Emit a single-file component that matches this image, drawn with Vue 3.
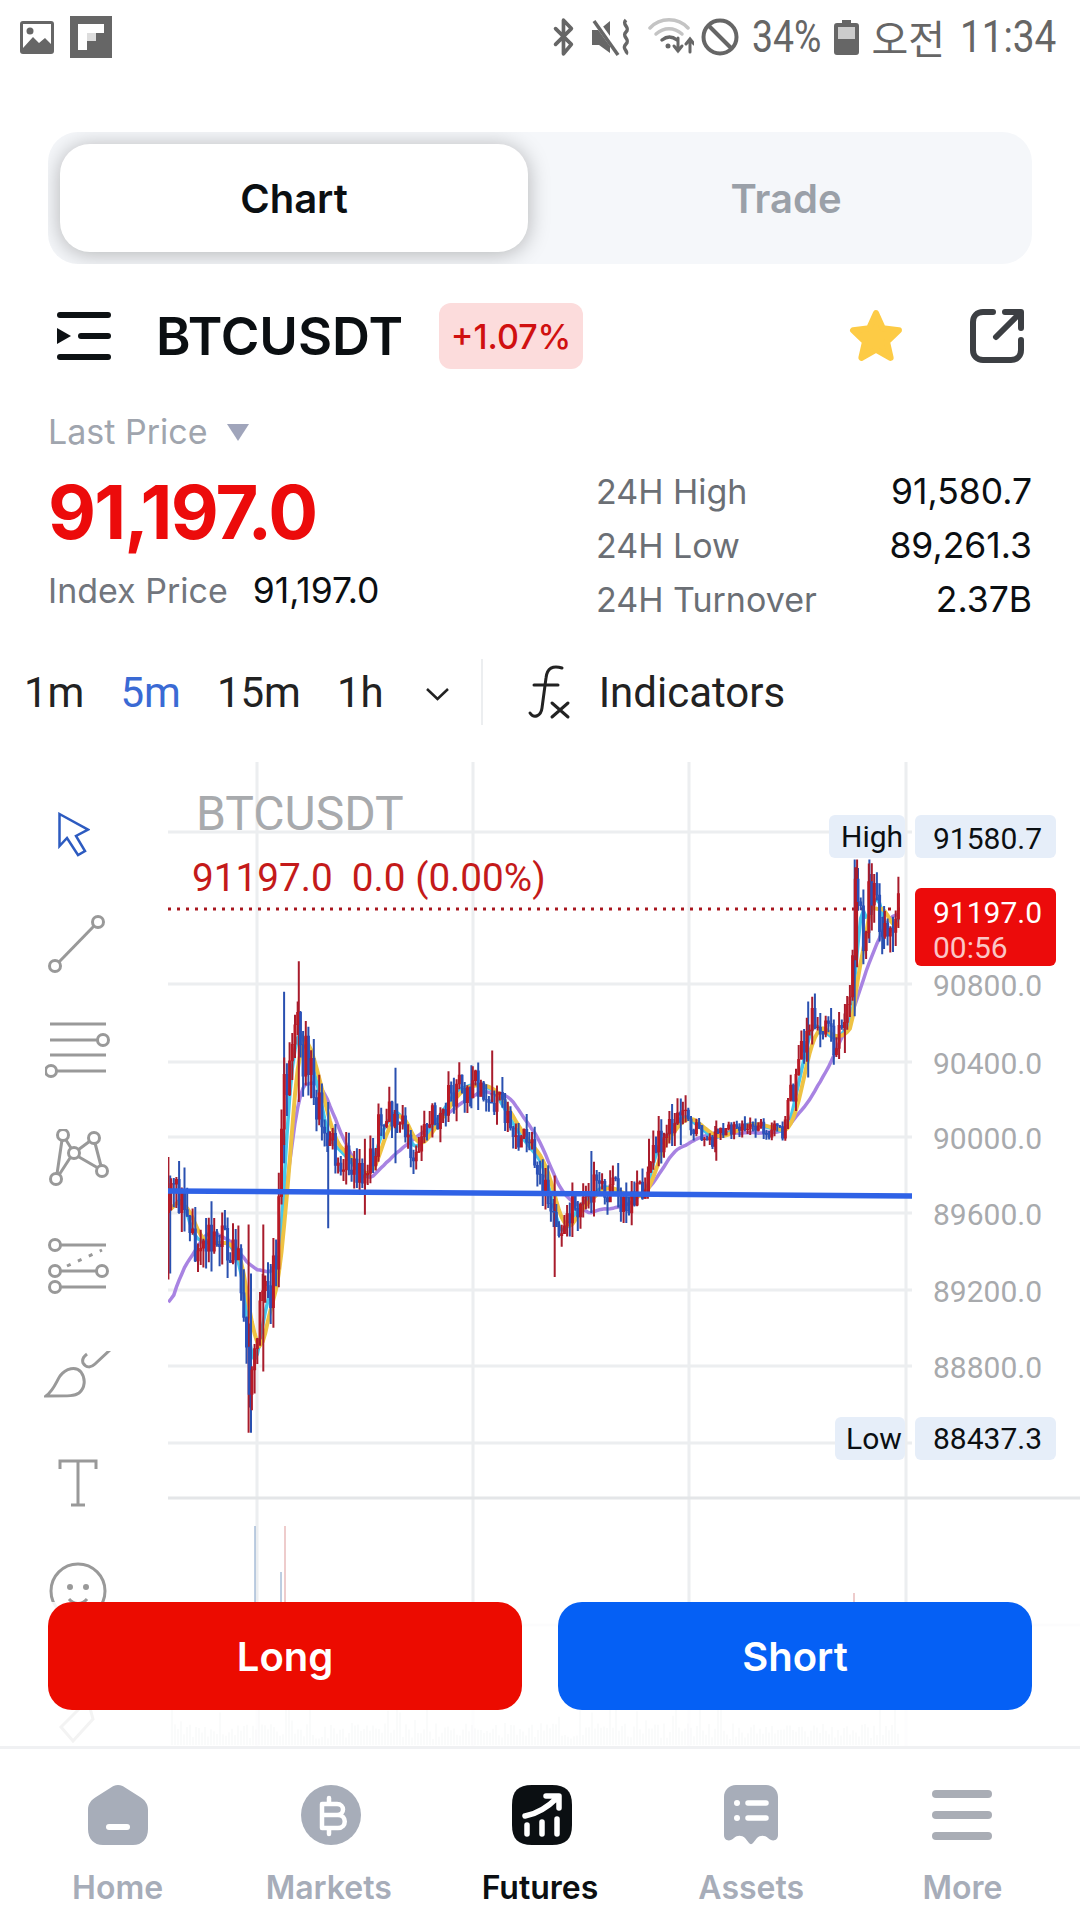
<script setup>
const S = 1080 / 882

const closeKeys = [[137,990],[145,975],[155,1010],[165,1015],[185,1015],[195,1040],[203,1125],[210,1090],[215,1060],[225,1040],[232,900],[240,835],[255,880],[265,930],[280,945],[297,965],[310,920],[322,905],[335,940],[350,920],[370,890],[385,885],[400,890],[420,925],[440,950],[455,1010],[470,985],[490,968],[510,978],[525,975],[532,940],[555,910],[580,930],[610,917],[640,925],[650,880],[660,835],[680,850],[695,830],[698,725],[705,760],[712,725],[722,765],[733,745]]
const purpleKeys = [[137,1070],[150,1035],[170,1005],[190,1015],[205,1035],[225,1040],[235,960],[245,885],[262,885],[280,930],[300,965],[320,945],[345,925],[370,905],[395,890],[415,895],[440,930],[460,975],[480,990],[510,985],[530,970],[550,940],[580,925],[610,925],[640,925],[660,900],[680,865],[695,830],[710,785],[725,750],[735,745]]
const spikes = [[137.5,945,1045],[139,960,1040],[203,1000,1170],[205,1040,1170],[215,1000,1120],[232,810,950],[244,785,900],[268,900,1003],[298,930,992],[323,872,950],[402,858,900],[385,870,905],[453,960,1043],[483,940,990],[530,930,975],[556,897,935],[585,915,948],[660,818,880],[690,820,860],[698,702,830],[700,702,790],[710,702,770],[712,705,760],[722,740,775]]

function interp(keys, x) {
  for (let i = 1; i < keys.length; i++) {
    if (x <= keys[i][0]) {
      const [x0, y0] = keys[i - 1]
      const [x1, y1] = keys[i]
      return y0 + ((y1 - y0) * (x - x0)) / (x1 - x0)
    }
  }
  return keys[keys.length - 1][1]
}

let seed = 20240
function rnd() {
  seed = (seed * 16807) % 2147483647
  return seed / 2147483647
}

function amp(x) {
  if (x < 262) return 44
  if (x > 560 && x < 642) return 14
  if (x > 692) return 36
  if (x > 642) return 30
  return 28
}

const closes = []
let wR = ''
let bR = ''
let wB = ''
let bB = ''
let prev = interp(closeKeys, 137)
for (let x = 137.5; x <= 734; x += 2.2) {
  const a = amp(x)
  const base = interp(closeKeys, x)
  const c = base + (rnd() - 0.5) * a
  closes.push([x, base])
  const hi = Math.min(prev, c) - rnd() * a * 0.45
  const lo = Math.max(prev, c) + rnd() * a * 0.45
  const px = (x * S).toFixed(1)
  const w = `M${px} ${(hi * S).toFixed(1)}V${(lo * S).toFixed(1)}`
  const b = `M${px} ${(Math.min(prev, c) * S).toFixed(1)}V${((Math.max(prev, c) + 0.5) * S).toFixed(1)}`
  if (c < prev) { wR += w; bR += b } else { wB += w; bB += b }
  prev = c
}
for (const [i, sp] of spikes.entries()) {
  const px = (sp[0] * S).toFixed(1)
  const w = `M${px} ${(sp[1] * S).toFixed(1)}V${(sp[2] * S).toFixed(1)}`
  if (i % 2 === 0) wR += w
  else wB += w
}

function smoothLine(pts, win) {
  const out = []
  for (let i = 0; i < pts.length; i++) {
    let sum = 0
    let n = 0
    for (let j = Math.max(0, i - win); j <= i; j++) { sum += pts[j][1]; n++ }
    out.push(`${(pts[i][0] * S).toFixed(1)},${((sum / n) * S).toFixed(1)}`)
  }
  return out.join(' ')
}
const cyanLine = smoothLine(closes, 3)
const yellowLine = smoothLine(closes, 6)
const purplePts = []
for (let x = 137.5; x <= 735; x += 2.2) purplePts.push([x, interp(purpleKeys, x) + (rnd() - 0.5) * 4])
function centered(pts, w) {
  return pts.map((p, i) => {
    let s = 0
    let n = 0
    for (let j = Math.max(0, i - w); j <= Math.min(pts.length - 1, i + w); j++) { s += pts[j][1]; n++ }
    return `${(p[0] * S).toFixed(1)},${((s / n) * S).toFixed(1)}`
  }).join(' ')
}
const purpleLine = centered(purplePts, 2)

const volBars = []
for (let x = 172; x < 900; x += 3) {
  volBars.push({ x, h: 6 + rnd() * (rnd() > 0.8 ? 40 : 16) })
}
const volumePath = volBars.map(v => `M${v.x} 1745V${(1745 - v.h).toFixed(1)}`).join('')

const hGrid = [832, 984, 1062, 1137, 1213, 1290, 1366, 1443]
const vGrid = [257, 473, 689, 906]
const axis = [['90800.0', 985], ['90400.0', 1063], ['90000.0', 1138], ['89600.0', 1214], ['89200.0', 1291], ['88800.0', 1367]]

const stats = [
  ['24H High', '91,580.7'],
  ['24H Low', '89,261.3'],
  ['24H Turnover', '2.37B'],
]
const frames = [
  { t: '1m', cls: 'f1' },
  { t: '5m', cls: 'f2 on' },
  { t: '15m', cls: 'f3' },
  { t: '1h', cls: 'f4' },
]
</script>

<template>
  <div class="page">
    <div class="status">
      <div class="st-left">
        <svg class="gal" width="34" height="33" viewBox="0 0 34 33">
          <rect width="34" height="33" rx="3" fill="#666" />
          <rect x="3" y="3" width="28" height="24" fill="#fff" />
          <circle cx="10" cy="10" r="3.5" fill="#666" />
          <path d="M3 27 13 16l6 6 6-5 6 6v7H3z" fill="#666" />
        </svg>
        <svg width="42" height="42" viewBox="0 0 42 42">
          <rect width="42" height="42" fill="#666" />
          <path d="M8 8h26v9H18v8h-1v9H8z" fill="#fff" />
          <path d="M17 17h9v8h-9z" fill="#ddd" />
        </svg>
      </div>
      <div class="st-right">
        <svg width="24" height="40" viewBox="0 0 20 38" fill="none" stroke="#666" stroke-width="3.5" stroke-linejoin="round" stroke-linecap="round">
          <path d="M2 11l15 15-7.500 9V3L17 11 2 26" />
        </svg>
        <svg width="42" height="38" viewBox="0 0 42 38">
          <path d="M1 12h7l11-9v32l-11-8H1z" fill="#666" />
          <path d="M3 1l26 36" stroke="#fff" stroke-width="6" />
          <path d="M3 3l24 34" stroke="#666" stroke-width="3.500" />
          <path d="M35 2c-5 5 5 7 0 12s5 7 0 12 3 7 0 10" fill="none" stroke="#666" stroke-width="3.500" />
        </svg>
        <svg width="46" height="38" viewBox="0 0 46 38" fill="none" stroke-linecap="round">
          <path d="M2 10C12-1 30-1 40 10" stroke="#c4c4c4" stroke-width="3.500" />
          <path d="M8 16c8-7 18-7 26 0" stroke="#c4c4c4" stroke-width="3.500" />
          <path d="M14 22c5-4 10-4 15 0" stroke="#666" stroke-width="3.500" />
          <circle cx="20" cy="28" r="2.500" fill="#666" />
          <path d="M30 20v13m-4-5 4 5 4-5" stroke="#666" stroke-width="3" />
          <path d="M42 34V21m-4 5 4-5 4 5" stroke="#666" stroke-width="3" />
        </svg>
        <svg width="38" height="38" viewBox="0 0 38 38" fill="none" stroke="#666" stroke-width="4">
          <circle cx="19" cy="19" r="16.500" />
          <path d="M7 7l24 24" />
        </svg>
        <span class="st-txt st-pct">34%</span>
        <svg width="25" height="35" viewBox="0 0 25 35">
          <path d="M8 0h9v3h5q3 0 3 3v26q0 3-3 3H3q-3 0-3-3V6q0-3 3-3h5z" fill="#666" />
          <rect x="4" y="7" width="17" height="12" fill="#ccc" />
        </svg>
        <span class="st-kr">오전</span>
        <span class="st-txt st-time">11:34</span>
      </div>
    </div>

    <div class="segment">
      <div class="seg-item active">Chart</div>
      <div class="seg-item">Trade</div>
    </div>

    <div class="head">
      <svg class="menu" width="54" height="48" viewBox="0 0 54 48" fill="#0d1114">
        <rect width="54" height="6" rx="3" />
        <rect x="21" y="21" width="33" height="6" rx="3" />
        <rect y="42" width="54" height="6" rx="3" />
        <path d="M0 16l14 8-14 8z" />
      </svg>
      <span class="sym">BTCUSDT</span>
      <span class="chg">+1.07%</span>
      <svg class="star" width="56" height="56" viewBox="0 0 54 54">
        <path d="M27 5l6.500 14.500L49 21.500 37.500 32.500 41 48 27 40 13 48 16.500 32.500 5 21.500 20.500 19.500z" fill="#fdcb45" stroke="#fdcb45" stroke-width="6" stroke-linejoin="round" />
      </svg>
      <svg class="share" width="54" height="54" viewBox="0 0 54 54" fill="none" stroke="#3c3f43" stroke-width="6" stroke-linecap="round" stroke-linejoin="round">
        <path d="M23 3H13C7 3 3 7 3 13V41C3 47 7 51 13 51H41C47 51 51 47 51 41V31" />
        <path d="M26 28 50 4M35 3H51V19" />
      </svg>
    </div>

    <div class="stats">
      <div class="st-l">
        <div class="last">Last Price <i class="tri"></i></div>
        <div class="price">91,197.0</div>
        <div class="index"><span>Index Price</span><b>91,197.0</b></div>
      </div>
      <div class="st-r">
        <div v-for="s in stats" :key="s[0]" class="st-row">
          <span>{{ s[0] }}</span><b>{{ s[1] }}</b>
        </div>
      </div>
    </div>

    <div class="frames">
      <span v-for="f in frames" :key="f.t" :class="['frame', f.cls]">{{ f.t }}</span>
      <svg class="chev" width="25" height="14" viewBox="0 0 25 14" fill="none" stroke="#222" stroke-width="2.500">
        <path d="M2 2l10.500 10L23 2" />
      </svg>
      <i class="divider"></i>
      <svg class="fx" width="44" height="56" viewBox="530 665 44 54" fill="none" stroke="#222" stroke-width="3" stroke-linecap="round">
        <path d="M565 668c-9-3-15 0-16 10l-4 30c-1 8-8 11-12 5" />
        <path d="M537 685h24" />
        <path d="M555 703l16 14M571 703l-16 14" />
      </svg>
      <span class="ind">Indicators</span>
    </div>

    <div class="chart">
      <div class="rail">
        <div class="tool">
          <svg class="arrow" width="32" height="46" viewBox="0 0 32 46" fill="none" stroke="#2d5bc0" stroke-width="2.500">
            <path d="M1.500 2 30 17.700 18 24 27 39 20 43 9 26 1.500 34z" />
          </svg>
        </div>
        <div class="tool">
          <svg width="60" height="60" viewBox="0 0 60 60" fill="none" stroke="#999" stroke-width="3">
            <circle cx="50" cy="9" r="5.500" /><circle cx="7" cy="53" r="5.500" /><path d="M46 13 11 49" />
          </svg>
        </div>
        <div class="tool">
          <svg width="66" height="60" viewBox="0 0 66 60" fill="none" stroke="#999" stroke-width="3">
            <path d="M5 3h56M5 19h48M5 34h56M11 50h50" /><circle cx="58" cy="19" r="5.500" /><circle cx="6" cy="50" r="5.500" />
          </svg>
        </div>
        <div class="tool">
          <svg width="66" height="60" viewBox="45 1130 66 60" fill="none" stroke="#999" stroke-width="3">
            <circle cx="63" cy="1136" r="5.500" /><circle cx="94" cy="1139" r="5.500" /><circle cx="74" cy="1154" r="5.500" /><circle cx="102" cy="1172" r="5.500" /><circle cx="56" cy="1180" r="5.500" />
            <path d="M62 1141 57 1175M66 1141 71 1149M70 1159 59 1176M78 1151 90 1142M95 1144 101 1167M79 1158 98 1169" />
          </svg>
        </div>
        <div class="tool">
          <svg width="62" height="60" viewBox="45 1238 62 60" fill="none" stroke="#999" stroke-width="3">
            <circle cx="53" cy="1246" r="5.500" /><circle cx="53" cy="1272" r="5.500" /><circle cx="100" cy="1272" r="5.500" /><circle cx="53" cy="1288" r="5.500" />
            <path d="M59 1246h45M59 1272h35M59 1288h45" />
            <path d="M65 1267 100 1251" stroke-dasharray="4 8" />
          </svg>
        </div>
        <div class="tool">
          <svg width="68" height="48" viewBox="46 1352 68 48" fill="none" stroke="#999" stroke-width="3">
            <path d="M48 1397c8-6 10-14 14-20 6-8 16-10 21-4 5 7 4 16-2 21-4 3-8 3-33 3z" />
            <path d="M89 1355c-4 3-5 6-4 9 3 5 8 5 12 1l15-14" />
          </svg>
        </div>
        <div class="tool">
          <svg width="40" height="48" viewBox="0 0 40 48" fill="none" stroke="#999" stroke-width="3">
            <path d="M2 10V2h36v8M20 2v44M13 46h14" />
          </svg>
        </div>
        <div class="tool">
          <svg width="58" height="58" viewBox="0 0 58 58" fill="none" stroke="#999" stroke-width="3">
            <circle cx="29" cy="29" r="27" /><circle cx="21" cy="25" r="1.500" fill="#999" /><circle cx="37" cy="25" r="1.500" fill="#999" /><path d="M20 37c5 6 13 6 18 0" />
          </svg>
        </div>
        <div class="tool ghost">
          <svg width="40" height="40" viewBox="0 0 40 40" fill="none" stroke="#999" stroke-width="3">
            <path d="M22 3 3 22l12 14 20-22-3-11z" />
          </svg>
        </div>
      </div>

      <svg class="plot" width="912" height="984" viewBox="168 762 912 984">
        <g stroke="#eceef0" stroke-width="3" fill="none">
          <path v-for="y in hGrid" :key="'h' + y" :d="`M168 ${y}H912`" />
          <path v-for="x in vGrid" :key="'v' + x" :d="`M${x} 762V1746`" />
          <path d="M168 1498H1080M168 1625H1080" stroke="#e4e6e8" />
        </g>
        <path :d="volumePath" stroke="#c9ccd2" stroke-width="1.500" fill="none" />
        <path d="M255 1526V1602M281 1572V1602" stroke="#7d9cc4" stroke-width="1" />
        <path d="M285 1526V1602M854 1593V1602" stroke="#d99" stroke-width="1" />

        <path d="M168 909H906" stroke="#a8171f" stroke-width="3" stroke-dasharray="3 6" fill="none" />

        <polyline :points="purpleLine" fill="none" stroke="#a883e2" stroke-width="3.500" />
        <polyline :points="cyanLine" fill="none" stroke="#45c8ec" stroke-width="3.500" />
        <polyline :points="yellowLine" fill="none" stroke="#eec243" stroke-width="4" />
        <path :d="wB" stroke="#2a50b0" stroke-width="2" fill="none" />
        <path :d="wR" stroke="#a81c2c" stroke-width="2" fill="none" />
        <path :d="bB" stroke="#2a50b8" stroke-width="3" fill="none" />
        <path :d="bR" stroke="#b81a26" stroke-width="3" fill="none" />
        <path d="M168 1191 912 1196" stroke="#2f62e6" stroke-width="5.500" fill="none" />

        <text class="wm" x="196" y="830">BTCUSDT</text>
        <text class="quote" x="192" y="891">91197.0&nbsp;&nbsp;0.0 (0.00%)</text>

        <rect x="829" y="815" width="76" height="43" rx="6" fill="#e6eef9" />
        <rect x="915" y="815" width="141" height="43" rx="6" fill="#e6eef9" />
        <text class="tag" x="841" y="847">High</text>
        <text class="tag" x="933" y="849">91580.7</text>

        <rect x="915" y="888" width="141" height="78" rx="6" fill="#ec0b0b" />
        <text class="tag w" x="933" y="923">91197.0</text>
        <text class="tag p" x="933" y="958">00:56</text>

        <text v-for="a in axis" :key="a[0]" class="tag g" x="933" :y="a[1] + 11">{{ a[0] }}</text>

        <rect x="835" y="1417" width="70" height="43" rx="6" fill="#e6eef9" />
        <rect x="915" y="1417" width="141" height="43" rx="6" fill="#e6eef9" />
        <text class="tag" x="846" y="1449">Low</text>
        <text class="tag" x="933" y="1449">88437.3</text>
      </svg>

      <div class="actions">
        <div class="btn long">Long</div>
        <div class="btn short">Short</div>
      </div>
    </div>

    <div class="nav">
      <div class="nav-item">
        <svg width="60" height="60" viewBox="0 0 60 60">
          <path d="M30 0c3 0 5 1 7 2.500L52 12c5 3 8 7 8 13v19c0 10-6 16-15 16H15C6 60 0 54 0 44V25c0-6 3-10 8-13L23 2.500C25 1 27 0 30 0z" fill="#a7adb9" />
          <rect x="18" y="39" width="24" height="6" rx="3" fill="#fff" />
        </svg>
        <span>Home</span>
      </div>
      <div class="nav-item">
        <svg class="nudge" width="60" height="60" viewBox="0 0 60 60">
          <circle cx="30" cy="30" r="30" fill="#a7adb9" />
          <path d="M21 19H36c8 0 8 11 0 11H21M21 30H37c9 0 9 13 0 13H21V19M28 13v6M28 43v6" fill="none" stroke="#fff" stroke-width="4.500" stroke-linecap="round" stroke-linejoin="round" />
        </svg>
        <span>Markets</span>
      </div>
      <div class="nav-item on">
        <svg class="nudge" width="60" height="60" viewBox="0 0 60 60">
          <path d="M20 0H40C54 0 60 6 60 20V40C60 54 54 60 40 60H20C6 60 0 54 0 40V20C0 6 6 0 20 0z" fill="#0b0f12" />
          <path d="M13 31C25 29 36 22 46 12M34 11H47V23M15 40V49M30 37V49M45 34V49" fill="none" stroke="#fff" stroke-width="5.500" stroke-linecap="round" stroke-linejoin="round" />
        </svg>
        <span>Futures</span>
      </div>
      <div class="nav-item">
        <svg width="54" height="60" viewBox="0 0 54 60">
          <path d="M12 0H42C49 0 54 5 54 12V50C54 56 48 57 44 53 41 50 36 50 33 53L29 58C28 59.500 26 59.500 25 58L21 53C18 50 13 50 10 53 6 57 0 56 0 50V12C0 5 5 0 12 0z" fill="#a7adb9" />
          <circle cx="13" cy="18" r="3" fill="#fff" /><circle cx="13" cy="33" r="3" fill="#fff" />
          <path d="M24 18H42M24 33H42" stroke="#fff" stroke-width="5.500" stroke-linecap="round" />
        </svg>
        <span>Assets</span>
      </div>
      <div class="nav-item">
        <svg width="60" height="60" viewBox="0 0 60 60" fill="#a9adb5">
          <rect y="5" width="60" height="8" rx="4" /><rect y="26" width="60" height="8" rx="4" /><rect y="47" width="60" height="8" rx="4" />
        </svg>
        <span>More</span>
      </div>
    </div>
  </div>
</template>

<style scoped>
.page {
  width: 1080px;
  height: 1920px;
  background: #fff;
  display: flex;
  flex-direction: column;
  overflow: hidden;
  font-family: Inter, "Noto Sans CJK KR", sans-serif;
}
.status {
  height: 132px;
  padding: 16px 23px 0 20px;
  box-sizing: border-box;
  display: flex;
  justify-content: space-between;
  align-items: flex-start;
}
.st-left { display: flex; align-items: center; gap: 16px; }
.st-right {
  display: flex;
  align-items: center;
  height: 42px;
  color: #666;
}
.st-right > svg:nth-child(1) { margin-right: 15px; }
.st-right > svg:nth-child(2) { margin-right: 15px; }
.st-right > svg:nth-child(3) { margin-right: 7px; }
.st-right > svg:nth-child(4) { margin-right: 13px; }
.st-txt {
  display: inline-block;
  font-family: Roboto, sans-serif;
  font-size: 45px;
  line-height: 42px;
  transform-origin: left center;
  white-space: nowrap;
}
.st-pct { width: 82px; transform: scaleX(0.83); }
.st-time { width: 97px; transform: scaleX(0.86); margin-left: 15px; }
.st-kr {
  font-family: "Noto Sans CJK KR", sans-serif;
  font-size: 40px;
  line-height: 42px;
  margin-left: 12px;
}
.segment {
  margin: 0 48px;
  height: 132px;
  padding: 12px;
  box-sizing: border-box;
  background: #f5f7fa;
  border-radius: 30px;
  overflow: hidden;
  display: grid;
  grid-template-columns: 468px 1fr;
}
.seg-item {
  display: flex;
  align-items: center;
  justify-content: center;
  font-size: 40px;
  font-weight: 600;
  color: #9aa0a8;
  border-radius: 30px;
}
.seg-item.active {
  background: #fff;
  color: #0b0f12;
  box-shadow: 0 2px 22px rgba(0, 0, 0, 0.28);
}
.seg-item:not(.active) { padding-left: 24px; }
.head {
  margin-top: 36px;
  height: 72px;
  padding: 0 56px 0 57px;
  display: flex;
  align-items: center;
}
.sym {
  margin-left: 45px;
  font-size: 52.5px;
  font-weight: 600;
  color: #0b0f12;
}
.chg {
  margin-left: 36px;
  width: 144px;
  height: 66px;
  border-radius: 12px;
  background: #fcdcdc;
  color: #d01010;
  font-size: 34px;
  font-weight: 500;
  display: flex;
  align-items: center;
  justify-content: center;
}
.star { margin-left: auto; }
.share { margin-left: 66px; }
.stats {
  margin-top: 38px;
  padding: 0 48px;
  height: 220px;
  display: flex;
  justify-content: space-between;
}
.st-l { width: 548px; }
.last {
  height: 44px;
  line-height: 44px;
  font-size: 34px;
  color: #a0a5ae;
  display: flex;
  align-items: center;
  gap: 20px;
}
.tri {
  width: 0;
  height: 0;
  border-left: 11px solid transparent;
  border-right: 11px solid transparent;
  border-top: 17px solid #a0a5bb;
}
.price {
  margin-top: 13px;
  height: 90px;
  line-height: 90px;
  font-size: 74px;
  font-weight: 700;
  letter-spacing: -1.8px;
  color: #ec0b0b;
}
.index {
  margin-top: 11px;
  height: 44px;
  display: flex;
  align-items: center;
  font-size: 34px;
  color: #72767d;
}
.index b {
  font-weight: 400;
  font-size: 35.5px;
  color: #0b0f12;
  margin-left: 25px;
}
.st-r {
  width: 436px;
  padding-top: 54px;
}
.st-row {
  height: 54px;
  display: flex;
  align-items: center;
  justify-content: space-between;
  font-size: 34px;
  color: #6b6f75;
}
.st-row b { font-weight: 400; font-size: 35.5px; color: #0b0f12; }
.frames {
  height: 132px;
  padding-bottom: 8px;
  box-sizing: border-box;
  display: flex;
  align-items: center;
  padding-left: 24px;
  font-family: Roboto, sans-serif;
  font-size: 42px;
  color: #222;
}
.f1 { margin-right: 36px; }
.f2 { margin-right: 36px; }
.f3 { margin-right: 36px; }
.on { color: #3a6ad4; }
.chev { margin-left: 41px; margin-top: 4px; }
.divider {
  width: 2px;
  height: 66px;
  background: #eceef0;
  margin-left: 31px;
}
.fx { margin-left: 44px; }
.ind { margin-left: 28px; }
.chart {
  flex: 1;
  position: relative;
  display: flex;
  min-height: 0;
}
.rail {
  width: 168px;
  flex: none;
  padding-top: 19px;
  box-sizing: border-box;
  display: flex;
  flex-direction: column;
  align-items: flex-start;
}
.tool {
  height: 108px;
  flex: none;
  width: 156px;
  display: flex;
  align-items: center;
  justify-content: center;
}
.arrow { margin-right: 8px; }
.ghost { margin-top: 26px; }
.plot { display: block; flex: none; }
.wm {
  font-family: Roboto, sans-serif;
  font-size: 48px;
  fill: #a8aaad;
}
.quote {
  font-family: Roboto, sans-serif;
  font-size: 38.7px;
  fill: #c41a1a;
}
.tag {
  font-family: Roboto, sans-serif;
  font-size: 30px;
  fill: #0b0f12;
}
.tag.w { fill: #fff; }
.tag.p { fill: #fbc6c6; }
.tag.g { fill: #a8aaad; }
.actions {
  position: absolute;
  left: 0;
  right: 0;
  top: 840px;
  bottom: 0;
  padding: 0 48px;
  box-sizing: border-box;
  background: rgba(255, 255, 255, 0.88);
  display: flex;
  align-items: flex-start;
  gap: 36px;
}
.btn {
  flex: 1;
  height: 108px;
  border-radius: 24px;
  color: #fff;
  font-size: 40px;
  font-weight: 600;
  display: flex;
  align-items: center;
  justify-content: center;
}
.long { background: #ec0b00; }
.short { background: #0560f5; }
.nav {
  height: 174px;
  flex: none;
  position: relative;
  background: #fff;
  border-top: 3px solid #f0f1f3;
  box-sizing: border-box;
  padding: 36px 12px 0;
  display: grid;
  grid-template-columns: repeat(5, 1fr);
}
.nav-item {
  display: flex;
  flex-direction: column;
  align-items: center;
  color: #a7adb9;
  font-size: 32px;
  font-weight: 600;
}
.nav-item.on { color: #0b0f12; }
.nudge { margin-left: 4px; }
.nav-item span { margin-top: 23px; line-height: 40px; }
</style>
